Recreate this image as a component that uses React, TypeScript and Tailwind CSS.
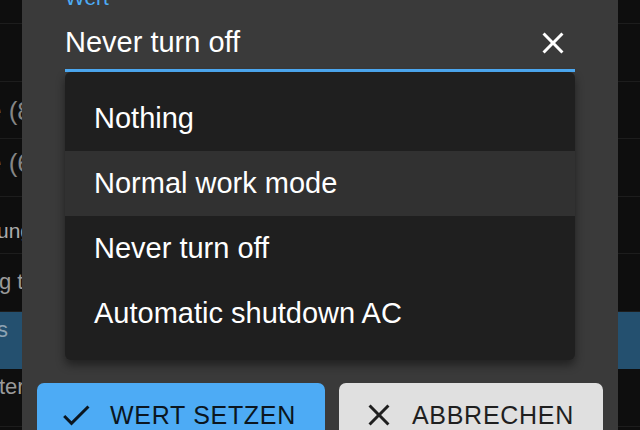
import React from "react";

const CheckIcon = () => (
  <svg width="36" height="36" viewBox="0 0 24 24" className="shrink-0" fill="currentColor">
    <path d="M9 16.17L4.83 12l-1.42 1.41L9 19 21 7l-1.41-1.41z" />
  </svg>
);

const CloseIcon = ({ className = "" }: { className?: string }) => (
  <svg width="36" height="36" viewBox="0 0 24 24" className={"shrink-0 " + className} fill="currentColor">
    <path d="M19 6.41L17.59 5 12 10.59 6.41 5 5 6.41 10.59 12 5 17.59 6.41 19 12 13.41 17.59 19 19 17.59 13.41 12z" />
  </svg>
);

type Row = { h: string; blue?: boolean; text?: string; cls?: string };

const leftRows: Row[] = [
  { h: "h-[24px]" },
  { h: "h-[57.5px]" },
  { h: "h-[57.5px]", text: "e (8)", cls: "text-[26px] text-[#858585] ml-[-13px] pt-[16px]" },
  { h: "h-[57.5px]", text: "e (6)", cls: "text-[26px] text-[#858585] ml-[-13px] pt-[11px]" },
  { h: "h-[57.5px]", text: "ung", cls: "text-[21px] text-[#ababab] ml-[-3px] pt-[23px]" },
  { h: "h-[57.5px]", text: "g t", cls: "text-[22px] text-[#9a9a9a] ml-[-1px] pt-[17px]" },
  { h: "h-[57.5px]", blue: true, text: "s", cls: "text-[22px] text-[#8ea3b3] ml-[-3px] pt-[7px]" },
  { h: "h-[57.5px]", text: "ter", cls: "text-[22px] text-[#9a9a9a] ml-[-1px] pt-[7px]" },
  { h: "h-[57.5px]" },
];

const Strip = ({ withText }: { withText: boolean }) => (
  <div className="w-[22px] shrink-0 flex flex-col overflow-hidden bg-[#0e0e0e]">
    {leftRows.map((r, i) => (
      <div
        key={i}
        className={
          r.h +
          " shrink-0 flex items-start overflow-hidden whitespace-nowrap leading-none border-b border-[#1d1d1d] " +
          (r.blue ? "bg-[#24506f] border-[#24506f]" : "")
        }
      >
        {withText && r.text ? <span className={"block " + r.cls}>{r.text}</span> : null}
      </div>
    ))}
  </div>
);

const options = ["Nothing", "Normal work mode", "Never turn off", "Automatic shutdown AC"];

export default function App() {
  return (
    <div className="w-[640px] h-[430px] overflow-hidden flex bg-[#0e0e0e] font-['Liberation_Sans',Arial,sans-serif]">
      <Strip withText={true} />
      <div className="w-[596px] shrink-0 bg-[#3a3a3a] flex flex-col">
        <div className="px-[43px] flex flex-col">
          <div className="mt-[-13px] text-[21px] leading-[21px] text-[#4dabf5]">Wert</div>
          <div className="flex items-center justify-between pt-[16.5px] pb-[8.5px] pr-[4px]">
            <span className="text-[29px] leading-[29px] text-white">Never turn off</span>
            <CloseIcon className="text-white" />
          </div>
          <div className="h-[3px] bg-[#4dabf5]" />
          <div className="rounded-[6px] bg-[#1f1f1f] py-[14px] shadow-[0_5px_10px_rgba(0,0,0,0.45)]">
            {options.map((o, i) => (
              <div
                key={o}
                className={
                  "h-[65px] flex items-center pl-[29px] text-[29px] leading-[29px] text-white " +
                  (i === 1 ? "bg-[#313131]" : "")
                }
              >
                {o}
              </div>
            ))}
          </div>
        </div>
        <div className="mt-[23px] px-[15px] flex justify-between">
          <div className="w-[288px] h-[64px] rounded-[7px] bg-[#4dabf5] flex items-center pl-[21px] text-[#0b1620]">
            <CheckIcon />
            <span className="ml-[16px] text-[25px] leading-[25px] tracking-[0.7px]">WERT SETZEN</span>
          </div>
          <div className="w-[264px] h-[64px] rounded-[7px] bg-[#e0e0e0] flex items-center pl-[21.5px] text-[#1f1f1f]">
            <CloseIcon />
            <span className="ml-[15.5px] text-[25px] leading-[25px] tracking-[0.7px]">ABBRECHEN</span>
          </div>
        </div>
      </div>
      <Strip withText={false} />
    </div>
  );
}
